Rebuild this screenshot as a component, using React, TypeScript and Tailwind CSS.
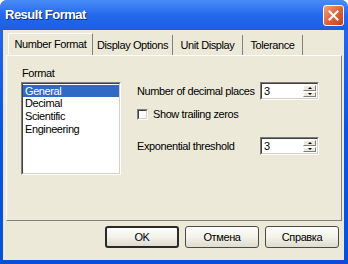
import React from "react";

const font = { fontFamily: '"Liberation Sans", Arial, sans-serif' };

function Spin({ value }: { value: string }) {
  return (
    <div className="flex h-[18px] w-[59px] border border-t-[#7a7a7a] border-l-[#7a7a7a] border-b-white border-r-white bg-white">
      <div className="flex-1 border border-t-[#404040] border-l-[#404040] border-b-[#d4d0c8] border-r-[#d4d0c8] flex">
        <div className="flex-1 pl-[2px] text-[11px] leading-[14px] text-black">{value}</div>
        <div className="flex w-[14px] flex-col gap-[1px] py-[1px] pr-[1px]">
          <div className="flex flex-1 items-center justify-center bg-[#ECE9D8] border border-t-white border-l-white border-b-[#808080] border-r-[#808080]">
            <div className="h-0 w-0 border-x-[2px] border-b-[2px] border-x-transparent border-b-black" />
          </div>
          <div className="flex flex-1 items-center justify-center bg-[#ECE9D8] border border-t-white border-l-white border-b-[#808080] border-r-[#808080]">
            <div className="h-0 w-0 border-x-[2px] border-t-[2px] border-x-transparent border-t-black" />
          </div>
        </div>
      </div>
    </div>
  );
}

function Btn({ label, def }: { label: string; def?: boolean }) {
  return (
    <div
      className={
        "flex h-[22px] w-[74px] items-center justify-center rounded-[3px] text-[11px] tracking-[-0.4px] text-black bg-gradient-to-b from-[#fdfdfb] via-[#f2f1ea] to-[#dedcd0] " +
        (def ? "border-2 border-[#2a2a2a]" : "border border-[#4a4a4a]")
      }
    >
      {label}
    </div>
  );
}

export default function App() {
  const tabs = ["Display Options", "Unit Display", "Tolerance"];
  return (
    <div
      className="flex h-[264px] w-[348px] flex-col overflow-hidden rounded-t-[7px] bg-gradient-to-b from-[#2d6ae8] via-[#0b55e0] to-[#0a4fd6]"
      style={font}
    >
      {/* Title bar */}
      <div className="flex h-[30px] items-center justify-between bg-gradient-to-b from-[#4a8cf7] via-[#2468ec] to-[#1a5ee2] pl-[5px] pr-[4px]">
        <span className="text-[13px] font-bold tracking-[-0.5px] text-white [text-shadow:1px_1px_0_#0a2a80]">
          Result Format
        </span>
        <div className="flex h-[21px] w-[21px] items-center justify-center rounded-[3px] border border-white bg-gradient-to-br from-[#f0a080] via-[#e0643c] to-[#c2401a]">
          <svg width="11" height="11" viewBox="0 0 11 11">
            <path d="M1.5 1.5 L9.5 9.5 M9.5 1.5 L1.5 9.5" stroke="white" strokeWidth="2" strokeLinecap="square" />
          </svg>
        </div>
      </div>

      {/* Body */}
      <div className="mb-[4px] ml-[3px] mr-[4px] flex flex-1 flex-col bg-[#ECE9D8] px-[3px] pt-[3px]">
        {/* Tabs */}
        <div className="ml-[2px] flex h-[22px] items-end text-[11px] tracking-[-0.4px] text-black">
          <div className="relative z-10 flex h-[22px] w-[85px] items-center justify-center border-l border-t border-r border-l-white border-t-white border-r-[#808080] bg-[#ECE9D8]">
            Number Format
          </div>
          {tabs.map((t, i) => (
            <div
              key={t}
              className={
                "flex h-[20px] items-center justify-center border-r border-r-[#808080] " +
                (i === 0 ? "w-[80px]" : i === 1 ? "w-[70px]" : "w-[60px]")
              }
            >
              {t}
            </div>
          ))}
        </div>

        {/* Panel */}
        <div className="flex h-[166px] w-[336px] border-l border-t border-r border-b border-l-white border-t-white border-r-[#808080] border-b-[#808080] pl-[14px] pt-[11px] text-[11px] tracking-[-0.4px] text-black">
          <div className="flex w-[100px] flex-col">
            <div className="h-[13px] pl-[1px] leading-[13px]">Format</div>
            <div className="mt-[2px] h-[93px] border border-t-[#808080] border-l-[#808080] border-b-white border-r-white bg-white">
              <div className="h-full border border-t-[#404040] border-l-[#404040] border-b-[#d4d0c8] border-r-[#d4d0c8] pt-[1px]">
                <div className="h-[12px] bg-[#316AC5] pl-[2px] leading-[12px] text-white">General</div>
                <div className="h-[13px] pl-[2px] leading-[13px]">Decimal</div>
                <div className="h-[13px] pl-[2px] leading-[13px]">Scientific</div>
                <div className="h-[13px] pl-[2px] leading-[13px]">Engineering</div>
              </div>
            </div>
          </div>

          <div className="ml-[16px] flex w-[182px] flex-col pt-[15px]">
            <div className="flex h-[18px] items-center justify-between">
              <span>Number of decimal places</span>
              <Spin value="3" />
            </div>
            <div className="mt-[8px] flex h-[13px] items-center gap-[5px]">
              <div className="h-[11px] w-[11px] border border-t-[#808080] border-l-[#808080] border-b-white border-r-white bg-white">
                <div className="h-full w-full border border-t-[#404040] border-l-[#404040] border-b-[#d4d0c8] border-r-[#d4d0c8]" />
              </div>
              <span>Show trailing zeros</span>
            </div>
            <div className="mt-[16px] flex h-[18px] items-center justify-between">
              <span>Exponential threshold</span>
              <Spin value="3" />
            </div>
          </div>
        </div>

        {/* Buttons */}
        <div className="mt-[5px] flex justify-end gap-[6px] pr-[2px]">
          <Btn label="OK" def />
          <Btn label="Отмена" />
          <Btn label="Справка" />
        </div>
      </div>
    </div>
  );
}
